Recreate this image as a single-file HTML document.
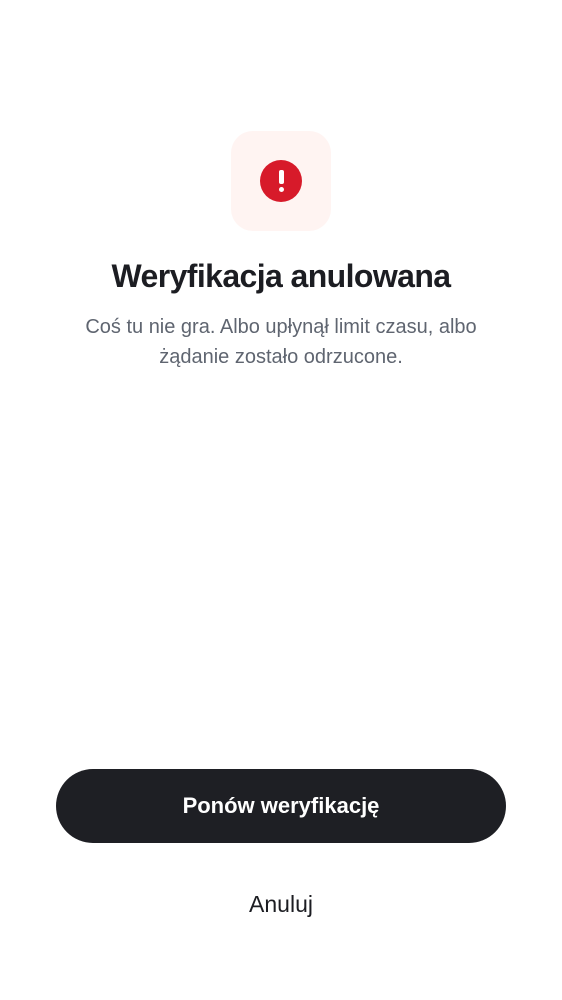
<!DOCTYPE html>
<html><head><meta charset="utf-8"><style>
body{margin:0;width:562px;height:1000px;background:#fff;font-family:"Liberation Sans",sans-serif;position:relative;overflow:hidden}
.box{position:absolute;left:231px;top:131px;width:100px;height:100px;border-radius:22px;background:#fff4f2}
.c{position:absolute;left:260px;top:160px;width:42px;height:42px;border-radius:50%;background:#d71a2a}
.bar{position:absolute;left:278.5px;top:170px;width:5px;height:14px;border-radius:2px;background:#fff}
.dot{position:absolute;left:278.5px;top:187px;width:5px;height:5px;border-radius:3px;background:#fff}
h1{position:absolute;top:258px;left:0;width:562px;margin:0;text-align:center;font-size:32px;font-weight:bold;color:#1c1d22;letter-spacing:-0.6px}
p{position:absolute;top:312px;left:0;width:562px;margin:0;text-align:center;font-size:20px;line-height:30px;color:#5f6570}
.btn{position:absolute;left:56px;top:769px;width:450px;height:74px;border-radius:37px;background:#1e1f24;color:#fff;font-size:22px;font-weight:bold;text-align:center;line-height:74px}
.a{position:absolute;top:891px;left:0;width:562px;text-align:center;font-size:23px;color:#1c1d22}
</style></head><body>
<div class="box"></div><div class="c"></div><div class="bar"></div><div class="dot"></div>
<h1>Weryfikacja anulowana</h1>
<p>Coś tu nie gra. Albo upłynął limit czasu, albo<br>żądanie zostało odrzucone.</p>
<div class="btn">Ponów weryfikację</div>
<div class="a">Anuluj</div>
</body></html>
